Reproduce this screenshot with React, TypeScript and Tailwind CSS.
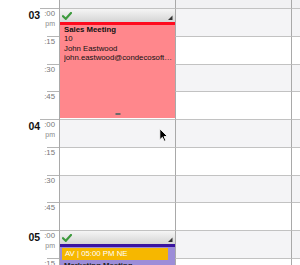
import React from "react";

type Row = { hour?: string; q: string; pm?: boolean };

const rows: Row[] = [
  { hour: "03", q: ":00", pm: true },
  { q: ":15" },
  { q: ":30" },
  { q: ":45" },
  { hour: "04", q: ":00", pm: true },
  { q: ":15" },
  { q: ":30" },
  { q: ":45" },
  { hour: "05", q: ":00", pm: true },
  { q: ":15" },
];

function Check() {
  return (
    <svg width="10" height="8" viewBox="0 0 10 8" className="block">
      <path d="M1 4.2 L3.8 6.8 L9 1" fill="none" stroke="#3d9a3d" strokeWidth="2.2" strokeLinecap="square" />
    </svg>
  );
}

function Corner() {
  return (
    <svg width="6" height="6" viewBox="0 0 6 6" className="block">
      <path d="M5.5 0.5 L5.5 5 L1 5 Z" fill="#333" />
    </svg>
  );
}

function EventHeader({ bar }: { bar: string }) {
  return (
    <>
      <div className="h-[13px] flex items-center justify-between pl-[2px] pr-[2px] bg-gradient-to-b from-[#f5f5f5] to-[#d5d5d5]">
        <Check />
        <div className="self-end mb-[1px]">
          <Corner />
        </div>
      </div>
      <div className={`h-[3px] ${bar}`} />
    </>
  );
}

export default function App() {
  return (
    <div
      className="relative w-[300px] h-[265px] overflow-hidden bg-white"
      style={{ fontFamily: '"Liberation Sans", Arial, sans-serif' }}
    >
      {/* top partial row */}
      <div className="flex h-[8px]">
        <div className="w-[60px] border-r border-[#a9a9a9] bg-white" />
        <div className="w-[116px] border-r border-[#a9a9a9] bg-[#f1f1f3]" />
        <div className="w-[116px] border-r border-[#a9a9a9] bg-[#f1f1f3]" />
        <div className="flex-1 bg-[#f1f1f3]" />
      </div>
      {rows.map((r, i) => {
        const gray = i % 2 === 0;
        const bg = gray ? "bg-[#f4f4f6]" : "bg-white";
        return (
          <div key={i} className="flex h-[27.75px]">
            <div className="w-[60px] border-r border-[#a9a9a9] bg-white flex flex-col">
              <div className={`h-px bg-[#b5b5b5] ${r.hour ? "ml-[40px]" : "ml-[47px]"}`} />
              <div className="flex justify-end items-start gap-[4px] pr-[4px]">
                {r.hour && (
                  <span className="text-[10.5px] font-bold leading-[10px] text-[#111] mt-[1px]">{r.hour}</span>
                )}
                <div className="flex flex-col items-end">
                  <span className="text-[7.8px] leading-[9px] text-[#777]">{r.q}</span>
                  {r.pm && <span className="text-[7px] leading-[8px] text-[#888] mt-[2px]">pm</span>}
                </div>
              </div>
            </div>
            <div className={`w-[116px] border-r border-t border-r-[#a9a9a9] border-t-[#c2c2c2] ${bg}`} />
            <div className={`w-[116px] border-r border-t border-r-[#a9a9a9] border-t-[#c2c2c2] ${bg}`} />
            <div className={`flex-1 border-t border-t-[#c2c2c2] ${bg}`} />
          </div>
        );
      })}

      {/* Event: Sales Meeting */}
      <div className="absolute left-[60px] top-[9px] w-[115px] h-[109px] bg-[#ff878c] flex flex-col">
        <EventHeader bar="bg-[#ff0a1e]" />
        <div className="pl-[4px] pt-0 text-[7.8px] leading-[9.25px] text-[#111]">
          <div className="font-bold">Sales Meeting</div>
          <div>10</div>
          <div>John Eastwood</div>
          <div className="truncate pr-[1px]">john.eastwood@condecosoft.com</div>
        </div>
        <div className="absolute bottom-[3px] left-1/2 -translate-x-1/2 w-[5px] h-[2px] bg-[#6a6a6a]" />
      </div>

      {/* Event: Marketing Meeting */}
      <div className="absolute left-[60px] top-[231px] w-[115px] h-[60px] bg-[#9c8dd8] flex flex-col">
        <EventHeader bar="bg-[#3a14a0]" />
        <div className="ml-[2px] mt-[1px] w-[106px] h-[12px] bg-[#f6b700] pl-[3px] text-[7.8px] leading-[12px] text-white">
          AV | 05:00 PM NE
        </div>
        <div className="pl-[4px] mt-[1px] text-[7.8px] leading-[9px] font-bold text-[#222]">Marketing Meeting</div>
      </div>

      {/* mouse cursor */}
      <svg
        className="absolute left-[159px] top-[128px]"
        width="9"
        height="14"
        viewBox="0 0 12 19"
      >
        <path
          d="M1 1 L1 16 L4.5 12.6 L7 18 L9.2 17 L6.8 11.6 L11.5 11.6 Z"
          fill="#000"
          stroke="#fff"
          strokeWidth="1.2"
          strokeLinejoin="round"
        />
      </svg>
    </div>
  );
}
